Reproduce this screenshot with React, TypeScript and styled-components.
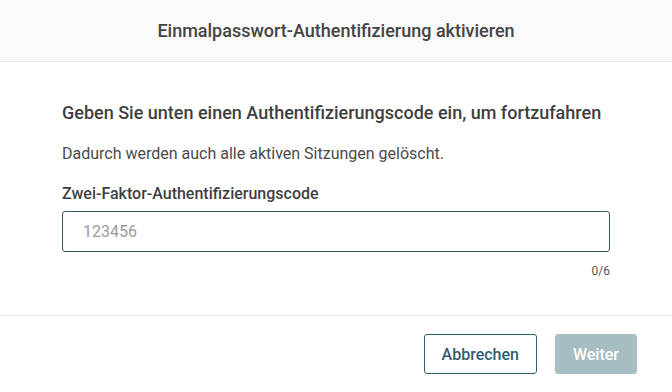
import styled, { createGlobalStyle } from 'styled-components';

const GlobalStyle = createGlobalStyle`
  html, body {
    margin: 0;
    padding: 0;
    background: #fff;
    font-family: Roboto, "Liberation Sans", Arial, sans-serif;
  }
`;

const Dialog = styled.div`
  width: 672px;
  height: 392px;
  display: flex;
  flex-direction: column;
  background: #fff;
`;

const Header = styled.header`
  height: 61px;
  display: flex;
  align-items: center;
  justify-content: center;
  background: #fafafa;
  border-bottom: 1px solid #e6e6e6;
`;

const Title = styled.h2`
  margin: 0;
  font-size: 18px;
  font-weight: 500;
  color: #444;
`;

const Body = styled.section`
  flex: 1;
  padding: 39px 62px 0;
  display: flex;
  flex-direction: column;
`;

const Heading = styled.h3`
  margin: 0;
  font-size: 18px;
  font-weight: 500;
  color: #3f3f3f;
  line-height: 24px;
`;

const Text = styled.p`
  margin: 19px 0 0;
  font-size: 16px;
  color: #4a4a4a;
  line-height: 20px;
`;

const Label = styled.label`
  margin-top: 20px;
  font-size: 16px;
  font-weight: 500;
  color: #3f3f3f;
  line-height: 20px;
`;

const CodeInput = styled.input`
  margin-top: 7px;
  box-sizing: border-box;
  height: 41px;
  width: 100%;
  padding: 0 20px;
  border: 1px solid #2f5766;
  border-radius: 3px;
  font-family: inherit;
  font-size: 16px;
  color: #333;
  caret-color: #777;
  outline: none;

  &::placeholder {
    color: #9a9a9a;
  }
`;

const Counter = styled.div`
  margin-top: 12px;
  text-align: right;
  font-size: 12px;
  color: #555;
`;

const Footer = styled.footer`
  height: 77px;
  box-sizing: border-box;
  border-top: 1px solid #e6e6e6;
  display: flex;
  align-items: center;
  justify-content: flex-end;
  gap: 18px;
  padding: 0 35px 0 0;
`;

const Button = styled.button<{ $primary?: boolean }>`
  height: 40px;
  box-sizing: border-box;
  padding: 0 17px;
  border-radius: 3px;
  font-family: inherit;
  font-size: 16px;
  font-weight: 500;
  cursor: pointer;
  border: 1px solid ${p => (p.$primary ? '#a6bdc2' : '#2f6172')};
  background: ${p => (p.$primary ? '#a6bdc2' : '#fff')};
  color: ${p => (p.$primary ? '#fff' : '#2f5f70')};
`;

export default function App() {
  return (
    <>
      <GlobalStyle />
      <Dialog>
        <Header>
          <Title>Einmalpasswort-Authentifizierung aktivieren</Title>
        </Header>
        <Body>
          <Heading>Geben Sie unten einen Authentifizierungscode ein, um fortzufahren</Heading>
          <Text>Dadurch werden auch alle aktiven Sitzungen gelöscht.</Text>
          <Label htmlFor="code">Zwei-Faktor-Authentifizierungscode</Label>
          <CodeInput id="code" placeholder="123456" maxLength={6} autoFocus />
          <Counter>0/6</Counter>
        </Body>
        <Footer>
          <Button>Abbrechen</Button>
          <Button $primary disabled>Weiter</Button>
        </Footer>
      </Dialog>
    </>
  );
}
